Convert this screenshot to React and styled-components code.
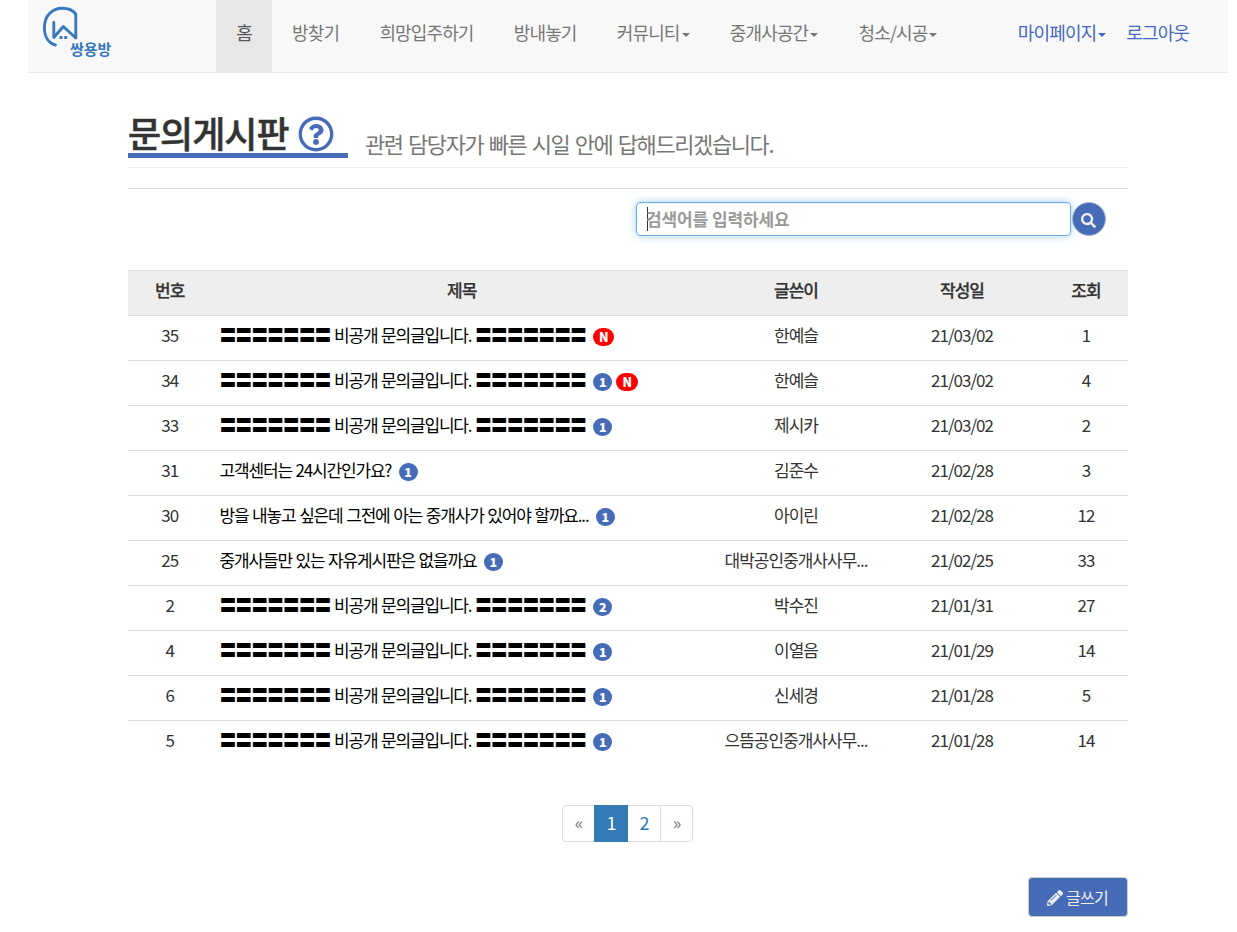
import React from "react";
import styled, { createGlobalStyle } from "styled-components";
import { FaRegQuestionCircle, FaSearch, FaPencilAlt } from "react-icons/fa";

const BLUE = "#476cb7";

const GlobalStyle = createGlobalStyle`
  *, *::before, *::after { box-sizing: border-box; }
  body {
    margin: 0;
    background: #fff;
    color: #333;
    font-family: "Noto Sans CJK KR", "Noto Sans", sans-serif;
    font-size: 17px;
    line-height: 24px;
    letter-spacing: -1px;
  }
  a { color: inherit; text-decoration: none; }
`;

const Page = styled.div`
  width: 1200px;
  margin-left: 28px;
  height: 932px;
`;

const Navbar = styled.nav`
  display: flex;
  height: 73px;
  background: #f8f8f8;
  border-bottom: 1px solid #e7e7e7;
  font-size: 18px;
  letter-spacing: -0.88px;
`;

const Brand = styled.a`
  width: 188px;
  padding: 0 0 0 12px;
`;

const LogoText = styled.text`
  font-size: 15px;
  font-weight: 700;
  letter-spacing: -0.1px;
`;

const NavItem = styled.a`
  display: flex;
  align-items: center;
  height: 72px;
  padding: 0 ${(p) => p.$pad || "20.15px"} 8px;
  color: ${(p) => (p.$accent ? "#4468c0" : p.$active ? "#555" : "#777")};
  background: ${(p) => (p.$active ? "#e7e7e7" : "transparent")};
  white-space: nowrap;
`;

const Caret = styled.span`
  margin: 6px 0 0 2px;
  border-top: 4px solid;
  border-left: 4px solid transparent;
  border-right: 4px solid transparent;
`;

const UserMenu = styled.div`
  display: flex;
  margin-left: auto;
  padding-right: 29px;
`;

const Content = styled.main`
  width: 1000px;
  margin: 0 auto;
`;

const PageHeader = styled.header`
  display: flex;
  align-items: flex-end;
  height: 95px;
  padding-bottom: 9px;
  border-bottom: 1px solid #eee;
`;

const Title = styled.h1`
  display: flex;
  width: 220px;
  height: 46px;
  margin: 0;
  border-bottom: 5px solid ${BLUE};
  font-size: 36px;
  font-weight: 500;
  line-height: 40px;
  -webkit-text-stroke: 0.5px #333;

  svg {
    width: 36px;
    height: 36px;
    margin: 4px 0 0 9px;
    color: ${BLUE};
  }
`;

const Subtitle = styled.span`
  margin-left: 17px;
  padding-bottom: 2px;
  color: #777;
  font-size: 22px;
  line-height: 26px;
  letter-spacing: -1.4px;
  word-spacing: 1.8px;
`;

const SearchBar = styled.form`
  display: flex;
  justify-content: flex-end;
  height: 82px;
  margin: 20px 0 0;
  padding: 14px 22px 0 0;
  border-top: 1px solid #ddd;
`;

const SearchField = styled.div`
  display: flex;
  align-items: center;
  width: 435px;
  height: 34px;
  margin-top: -1px;
  padding-left: 10px;
  border: 1px solid #66afe9;
  border-radius: 4px;
  box-shadow: inset 0 1px 1px rgba(0, 0, 0, 0.075), 0 0 8px rgba(102, 175, 233, 0.6);
  color: #999;
  font-weight: 700;
  letter-spacing: -0.1px;
`;

const TextCursor = styled.span`
  width: 1px;
  height: 24px;
  margin-right: -2px;
  background: #333;
`;

const SearchButton = styled.button`
  display: flex;
  align-items: center;
  justify-content: center;
  width: 34px;
  height: 34px;
  margin: -1px 0 0 1px;
  padding: 2px 1px 0 0;
  border: 1px solid #a9b4cc;
  border-radius: 50%;
  background: ${BLUE};
  color: #eee;
  font-size: 15px;
`;

const Table = styled.div`
  height: 495px;
`;

const Row = styled.div`
  display: grid;
  grid-template-columns: 83.5px 500.5px 168px 164px 84px;
  height: 45px;
  padding-top: 7px;
  border-top: 1px solid #ddd;
  text-align: center;
`;

const HeadRow = styled(Row)`
  background: #eee;
  font-weight: 500;
  -webkit-text-stroke: 0.25px #333;
`;

const Subject = styled.div`
  display: flex;
  padding-left: 8px;
  color: #000;
  white-space: pre;
  letter-spacing: -1.17px;
  word-spacing: 1px;
`;

const Badge = styled.span`
  height: 18px;
  width: ${(p) => (p.$new ? (p.$next ? "22px" : "21px") : "19px")};
  margin: 5px 0 0 ${(p) => (p.$next ? "4px" : "7.4px")};
  border-radius: 10px;
  background: ${(p) => (p.$new ? "#f00" : BLUE)};
  color: #fff;
  font-size: 12.5px;
  font-weight: 900;
  line-height: 18px;
  letter-spacing: 0;
  text-align: center;
`;

const Pagination = styled.div`
  display: flex;
  width: 131px;
  height: 37px;
  margin: 40px 0 0 434px;
  border: 1px solid #ddd;
  border-radius: 4px;
`;

const PageLink = styled.a`
  width: ${(p) => (p.$active ? "34px" : p.$first ? "31px" : "32px")};
  height: ${(p) => (p.$active ? "37px" : "35px")};
  margin-top: ${(p) => (p.$active ? "-1px" : "0")};
  padding-top: ${(p) => (p.$active ? "6px" : "5px")};
  border-left: ${(p) => (p.$divider ? "1px solid #ddd" : "0")};
  background: ${(p) => (p.$active ? "#337ab7" : "transparent")};
  color: ${(p) => (p.$active ? "#fff" : p.$muted ? "#777" : "#337ab7")};
  font-size: 18px;
  line-height: 23px;
  text-align: center;
`;

const Actions = styled.div`
  display: flex;
  justify-content: flex-end;
  margin-top: 35px;
`;

const WriteButton = styled.button`
  display: flex;
  align-items: center;
  justify-content: center;
  gap: 3px;
  width: 100px;
  height: 40px;
  padding: 2px 1px 0 0;
  border: 1px solid #ccc;
  border-radius: 4px;
  background: ${BLUE};
  color: #eee;
  font: inherit;
  font-size: 16px;
  letter-spacing: -0.7px;

  span { padding-bottom: 3px; }
`;

const HIDDEN = "〓〓〓〓〓〓〓 비공개 문의글입니다. 〓〓〓〓〓〓〓";

const posts = [
  { no: 35, title: HIDDEN, isNew: true, writer: "한예슬", date: "21/03/02", views: 1 },
  { no: 34, title: HIDDEN, replies: 1, isNew: true, writer: "한예슬", date: "21/03/02", views: 4 },
  { no: 33, title: HIDDEN, replies: 1, writer: "제시카", date: "21/03/02", views: 2 },
  { no: 31, title: "고객센터는 24시간인가요?", replies: 1, writer: "김준수", date: "21/02/28", views: 3 },
  { no: 30, title: "방을 내놓고 싶은데 그전에 아는 중개사가 있어야 할까요...", replies: 1, writer: "아이린", date: "21/02/28", views: 12 },
  { no: 25, title: "중개사들만 있는 자유게시판은 없을까요", replies: 1, writer: "대박공인중개사사무...", date: "21/02/25", views: 33 },
  { no: 2, title: HIDDEN, replies: 2, writer: "박수진", date: "21/01/31", views: 27 },
  { no: 4, title: HIDDEN, replies: 1, writer: "이열음", date: "21/01/29", views: 14 },
  { no: 6, title: HIDDEN, replies: 1, writer: "신세경", date: "21/01/28", views: 5 },
  { no: 5, title: HIDDEN, replies: 1, writer: "으뜸공인중개사사무...", date: "21/01/28", views: 14 },
];

const menu = [
  { label: "홈", active: true },
  { label: "방찾기" },
  { label: "희망입주하기" },
  { label: "방내놓기" },
  { label: "커뮤니티", caret: true },
  { label: "중개사공간", caret: true },
  { label: "청소/시공", caret: true },
];

function Logo() {
  return (
    <svg width="76" height="62" viewBox="40 0 76 62">
      <g fill="none" stroke="#3878bd" strokeWidth="2.9" strokeLinecap="round" strokeLinejoin="round">
        <path d="M55.500 45C48 43 44.400 36 44.400 27.500C44.400 16 52 8.300 62.500 8.300C68 8.300 73 10.500 75.800 14V38L63.300 26.500L53.800 37.500V22.500" />
      </g>
      <g fill="#3878bd">
        <rect x="59.500" y="36" width="3" height="3" rx="0.600" />
        <rect x="64.200" y="36" width="3" height="3" rx="0.600" />
        <LogoText x="70" y="55">쌍용방</LogoText>
      </g>
    </svg>
  );
}

export default function App() {
  return (
    <Page>
      <GlobalStyle />
      <Navbar>
        <Brand href="#"><Logo /></Brand>
        {menu.map((m) => (
          <NavItem key={m.label} href="#" $active={m.active}>
            {m.label}
            {m.caret && <Caret />}
          </NavItem>
        ))}
        <UserMenu>
          <NavItem href="#" $accent $pad="10px">마이페이지<Caret /></NavItem>
          <NavItem href="#" $accent $pad="10px">로그아웃</NavItem>
        </UserMenu>
      </Navbar>
      <Content>
        <PageHeader>
          <Title>문의게시판<FaRegQuestionCircle /></Title>
          <Subtitle>관련 담당자가 빠른 시일 안에 답해드리겠습니다.</Subtitle>
        </PageHeader>
        <SearchBar>
          <SearchField><TextCursor />검색어를 입력하세요</SearchField>
          <SearchButton type="button" aria-label="검색"><FaSearch /></SearchButton>
        </SearchBar>
        <Table>
          <HeadRow>
            <span>번호</span><span>제목</span><span>글쓴이</span><span>작성일</span><span>조회</span>
          </HeadRow>
          {posts.map((p) => (
            <Row key={p.no}>
              <span>{p.no}</span>
              <Subject>
                {p.title}
                {p.replies && <Badge>{p.replies}</Badge>}
                {p.isNew && <Badge $new $next={!!p.replies}>N</Badge>}
              </Subject>
              <span>{p.writer}</span>
              <span>{p.date}</span>
              <span>{p.views}</span>
            </Row>
          ))}
        </Table>
        <Pagination>
          <PageLink $muted $first>«</PageLink>
          <PageLink $active>1</PageLink>
          <PageLink>2</PageLink>
          <PageLink $muted $divider>»</PageLink>
        </Pagination>
        <Actions>
          <WriteButton type="button"><FaPencilAlt /><span>글쓰기</span></WriteButton>
        </Actions>
      </Content>
    </Page>
  );
}
